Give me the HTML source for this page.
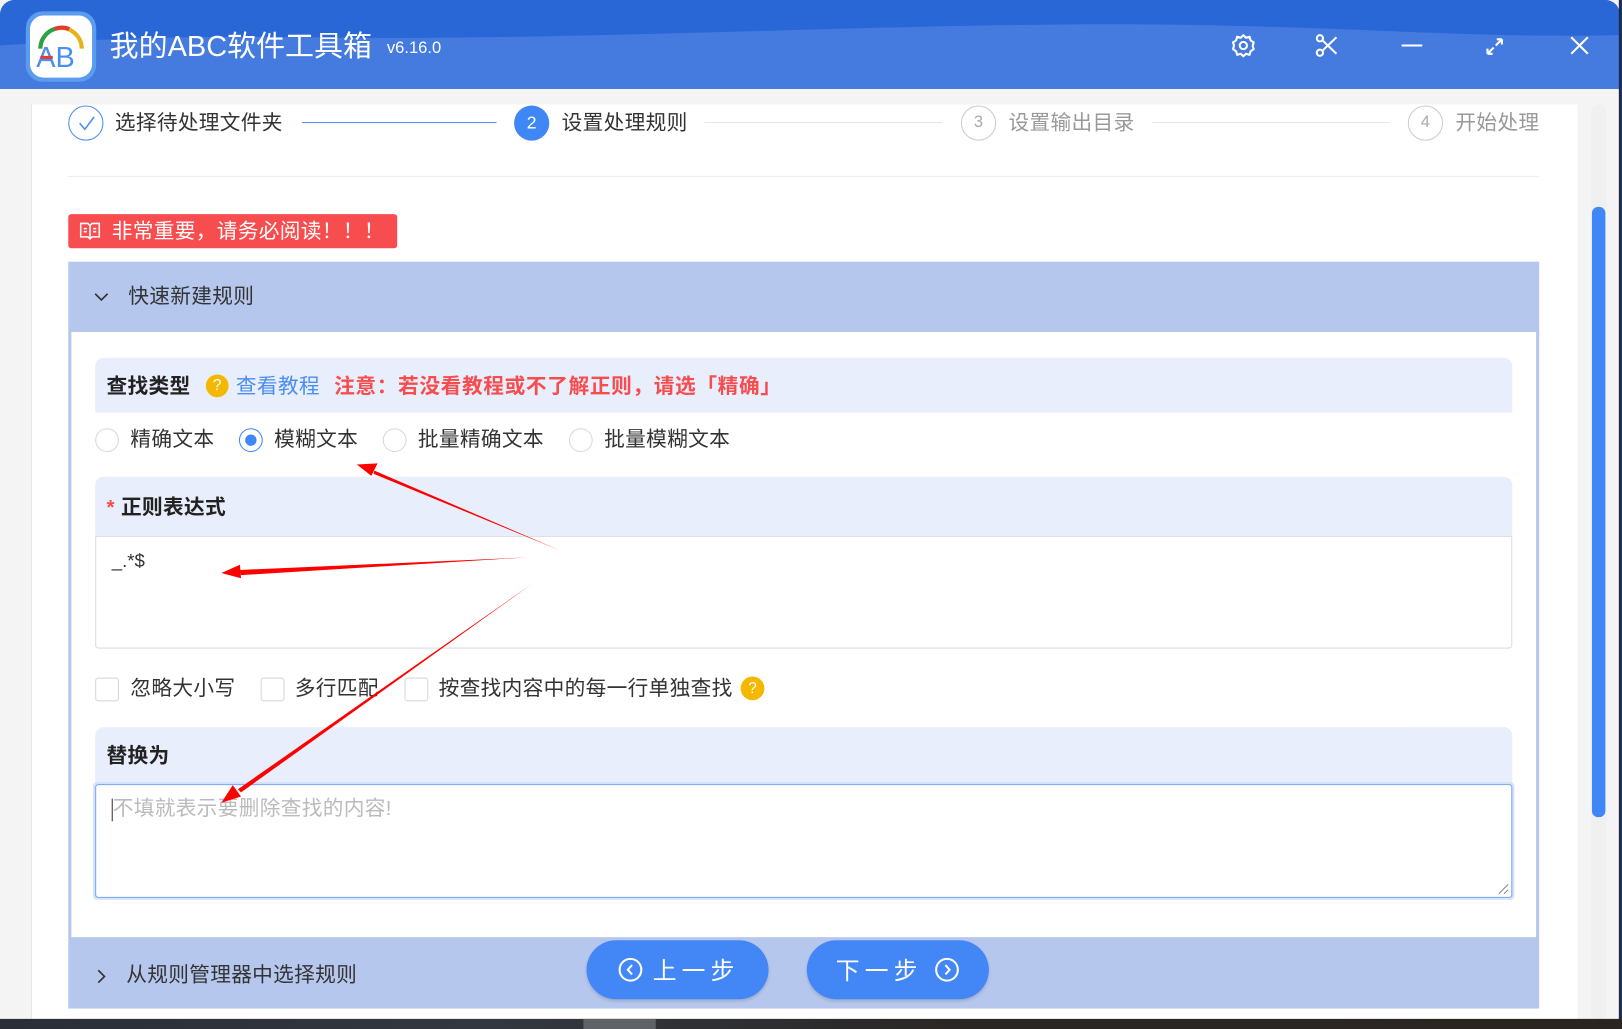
<!DOCTYPE html>
<html><head><meta charset="utf-8"><style>
*{margin:0;padding:0;box-sizing:border-box}
html,body{width:1622px;height:1029px;overflow:hidden;background:#f4f4f4}
body{font-family:"Liberation Sans","Noto Sans CJK SC",sans-serif;color:#333}
#w{position:absolute;left:0;top:0;width:1568px;height:995px;transform:scale(1.0344);transform-origin:0 0;background:#f4f4f4}
.a{position:absolute;white-space:nowrap}
.t{line-height:1;transform:translateY(-50%)}
.f{font-size:20px;letter-spacing:0.3px}
</style></head><body><div id="w">
<div class="a" style="left:0;top:0;width:1566px;height:86px;background:#457bde;border-radius:14px 14px 0 0;overflow:hidden">
<svg width="1566" height="86" style="position:absolute;left:0;top:0"><path d="M0 0H1566V34C1400 38 1250 20 1000 24C800 26 500 40 300 36C150 34 60 40 0 44Z" fill="#2a67d6"/></svg>
</div>
<div class="a" style="left:1565px;top:0;width:3px;height:995px;background:#1a2a50"></div>
<div class="a" style="left:25px;top:11px;width:68px;height:68px;border-radius:16px;background:#5b9bf0"></div>
<div class="a" style="left:29px;top:15px;width:60px;height:60px;border-radius:13px;background:#fff"></div>
<svg class="a" style="left:29px;top:15px" width="60" height="60"><path d="M10 32A20 20 0 0 1 50 32" fill="none" stroke="#e8b21b" stroke-width="4"/><path d="M10 32A20 20 0 0 1 24 13" fill="none" stroke="#2aa14b" stroke-width="4"/><path d="M24 13A20 20 0 0 1 38 13" fill="none" stroke="#e53935" stroke-width="4"/><text x="6" y="50" font-size="28" font-family="Liberation Sans" fill="#4a8ef0">AB</text><rect x="10" y="39" width="12" height="3" fill="#e53935"/></svg>
<div class="a t" style="left:106px;top:45px;font-size:28px;color:#fff">我的ABC软件工具箱</div>
<div class="a t" style="left:374px;top:47px;font-size:16px;color:#fff">v6.16.0</div>
<svg class="a" style="left:1190px;top:32px" width="350" height="26" fill="none" stroke="#fff" stroke-width="2">
<circle cx="12" cy="12" r="3.5"/><path d="M12 2l2.5 2.5 3.5-1 1 3.5 3 2-1 3.5 1 3-3 2-1 3.5-3.5-1-2.5 2.5-2.5-2.5-3.5 1-1-3.5-3-2 1-3.5-1-3 3-2 1-3.5 3.5 1z" stroke-linejoin="round"/>
<g transform="translate(81,0)"><circle cx="5" cy="5" r="3"/><circle cx="5" cy="19" r="3"/><path d="M7.5 7L21 20M7.5 17L21 4"/></g>
<path d="M165 12H185"/>
<path d="M248 20L254 14M262 6L256 12M248 20v-5M248 20h5M262 6h-5M262 6v5"/>
<path d="M329 4l16 16M345 4l-16 16"/>
</svg>
<div class="a" style="left:30px;top:101px;width:1495px;height:884px;background:#fff;border-left:1px solid #e6e6e6"></div>
<div class="a" style="left:66px;top:102px;width:34px;height:34px;border-radius:50%;border:1px solid #4a8ef0"></div>
<svg class="a" style="left:66px;top:102px" width="34" height="34"><path d="M11 17l5 6 9-12" fill="none" stroke="#4a8ef0" stroke-width="1.5"/></svg>
<div class="a t f" style="left:111px;top:119px;color:#333">选择待处理文件夹</div>
<div class="a" style="left:292px;top:118px;width:188px;height:1px;background:#4a8ef0"></div>
<div class="a" style="left:497px;top:102px;width:34px;height:34px;border-radius:50%;background:#3f87f5;color:#fff;font-size:17px;text-align:center;line-height:34px">2</div>
<div class="a t f" style="left:543px;top:119px;color:#333">设置处理规则</div>
<div class="a" style="left:681px;top:118px;width:230px;height:1px;background:#e6e6e6"></div>
<div class="a" style="left:929px;top:102px;width:34px;height:34px;border-radius:50%;border:1px solid #ccc;color:#aaa;font-size:16px;text-align:center;line-height:32px">3</div>
<div class="a t f" style="left:975px;top:119px;color:#999">设置输出目录</div>
<div class="a" style="left:1114px;top:118px;width:229px;height:1px;background:#e6e6e6"></div>
<div class="a" style="left:1361px;top:102px;width:34px;height:34px;border-radius:50%;border:1px solid #ccc;color:#aaa;font-size:16px;text-align:center;line-height:32px">4</div>
<div class="a t f" style="left:1407px;top:119px;color:#999">开始处理</div>
<div class="a" style="left:66px;top:170px;width:1422px;height:1px;background:#ececec"></div>
<div class="a" style="left:66px;top:207px;width:318px;height:33px;background:#f74d4f;border-radius:3px"></div>
<svg class="a" style="left:77px;top:214px" width="20" height="18" fill="none" stroke="#fff" stroke-width="1.5"><path d="M1 2h7l2 2 2-2h7v13h-7l-2 2-2-2H1zM10 4v13M4 7h3M4 10h3M13 7h3M13 10h3"/></svg>
<div class="a t f" style="left:108px;top:224px;color:#fff">非常重要，请务必阅读！！！</div>
<div class="a" style="left:66px;top:253px;width:1422px;height:722px;background:#b6c7ee"></div>
<svg class="a" style="left:90px;top:280px" width="16" height="14"><path d="M2 4l6 6 6-6" fill="none" stroke="#333" stroke-width="1.6"/></svg>
<div class="a t f" style="left:124px;top:287px;color:#333">快速新建规则</div>
<div class="a" style="left:69px;top:321px;width:1416px;height:585px;background:#fff"></div>
<div class="a" style="left:92px;top:346px;width:1370px;height:53px;background:#e8eefb;border-radius:8px 8px 0 0"></div>
<div class="a t f" style="left:103px;top:374px;font-weight:bold;color:#222">查找类型</div>
<div class="a" style="left:199px;top:362px;width:22px;height:22px;border-radius:50%;background:#f5b800;color:#fff;font-size:15px;text-align:center;line-height:22px">?</div>
<div class="a t f" style="left:228px;top:374px;color:#4a8ef0">查看教程</div>
<div class="a t f" style="left:323px;top:374px;font-weight:bold;color:#f74d4f;letter-spacing:0.6px">注意：若没看教程或不了解正则，请选「精确」</div>
<div class="a" style="left:92px;top:414px;width:23px;height:23px;border-radius:50%;border:1px solid #d8d8d8"></div>
<div class="a t f" style="left:126px;top:425px">精确文本</div>
<div class="a" style="left:231px;top:414px;width:23px;height:23px;border-radius:50%;border:1px solid #3f87f5"></div>
<div class="a" style="left:237px;top:420px;width:11px;height:11px;border-radius:50%;background:#3f87f5"></div>
<div class="a t f" style="left:265px;top:425px">模糊文本</div>
<div class="a" style="left:370px;top:414px;width:23px;height:23px;border-radius:50%;border:1px solid #d8d8d8"></div>
<div class="a t f" style="left:404px;top:425px">批量精确文本</div>
<div class="a" style="left:550px;top:414px;width:23px;height:23px;border-radius:50%;border:1px solid #d8d8d8"></div>
<div class="a t f" style="left:584px;top:425px">批量模糊文本</div>
<div class="a" style="left:92px;top:461px;width:1370px;height:57px;background:#e8eefb;border-radius:8px 8px 0 0"></div>
<div class="a t f" style="left:103px;top:491px;font-weight:bold;color:#222"><span style="color:#f74d4f">*</span> 正则表达式</div>
<div class="a" style="left:92px;top:518px;width:1370px;height:109px;border:1px solid #dcdcdc;border-radius:0 0 3px 3px;background:#fff"></div>
<div class="a t" style="left:108px;top:542px;font-size:18px;color:#333">_.*$</div>
<div class="a" style="left:92px;top:655px;width:23px;height:23px;border:1px solid #d8d8d8;border-radius:3px"></div>
<div class="a t f" style="left:126px;top:666px">忽略大小写</div>
<div class="a" style="left:252px;top:655px;width:23px;height:23px;border:1px solid #d8d8d8;border-radius:3px"></div>
<div class="a t f" style="left:285px;top:666px">多行匹配</div>
<div class="a" style="left:391px;top:655px;width:23px;height:23px;border:1px solid #d8d8d8;border-radius:3px"></div>
<div class="a t f" style="left:424px;top:666px">按查找内容中的每一行单独查找</div>
<div class="a" style="left:716px;top:654px;width:23px;height:23px;border-radius:50%;background:#f5b800;color:#fff;font-size:15px;text-align:center;line-height:23px">?</div>
<div class="a" style="left:92px;top:703px;width:1370px;height:55px;background:#e8eefb;border-radius:8px 8px 0 0"></div>
<div class="a t f" style="left:103px;top:731px;font-weight:bold;color:#222">替换为</div>
<div class="a" style="left:90px;top:756px;width:1374px;height:114px;background:#d4e2fb;border-radius:4px"></div>
<div class="a" style="left:92px;top:758px;width:1370px;height:110px;border:1px solid #7aa7f0;border-radius:3px;background:#fff"></div>
<div class="a" style="left:108px;top:772px;width:1px;height:22px;background:#333"></div>
<div class="a t f" style="left:109px;top:782px;color:#bbb">不填就表示要删除查找的内容!</div>
<svg class="a" style="left:1447px;top:853px" width="12" height="12"><path d="M11 2L2 11M11 7L7 11" stroke="#888"/></svg>
<svg class="a" style="left:90px;top:936px" width="16" height="16"><path d="M5 2l6 6-6 6" fill="none" stroke="#333" stroke-width="1.6"/></svg>
<div class="a t f" style="left:122px;top:943px;color:#333">从规则管理器中选择规则</div>
<div class="a" style="left:567px;top:909px;width:176px;height:57px;border-radius:29px;background:#4287f5;box-shadow:0 2px 3px rgba(0,0,0,.15)"></div>
<div class="a" style="left:598px;top:926px;width:23px;height:23px;border-radius:50%;border:2px solid #fff"></div>
<svg class="a" style="left:598px;top:926px" width="23" height="23"><path d="M13 7l-4 4.5 4 4.5" fill="none" stroke="#fff" stroke-width="2"/></svg>
<div class="a t" style="left:631px;top:939px;font-size:23px;color:#fff;letter-spacing:5px">上一步</div>
<div class="a" style="left:780px;top:909px;width:176px;height:57px;border-radius:29px;background:#4287f5;box-shadow:0 2px 3px rgba(0,0,0,.15)"></div>
<div class="a t" style="left:808px;top:939px;font-size:23px;color:#fff;letter-spacing:5px">下一步</div>
<div class="a" style="left:904px;top:926px;width:23px;height:23px;border-radius:50%;border:2px solid #fff"></div>
<svg class="a" style="left:904px;top:926px" width="23" height="23"><path d="M10 7l4 4.5-4 4.5" fill="none" stroke="#fff" stroke-width="2"/></svg>
<div class="a" style="left:1538px;top:101px;width:15px;height:884px;background:#f0f0f0;border-radius:7px"></div>
<div class="a" style="left:1539px;top:200px;width:13px;height:590px;background:#3f87f5;border-radius:6px"></div>
<div class="a" style="left:0;top:985px;width:1568px;height:10px;background:linear-gradient(90deg,#2a2e36,#333840 30%,#2a2624 60%,#2b2522)"></div>
<div class="a" style="left:564px;top:985px;width:70px;height:10px;background:#5f6266"></div>
<svg class="a" style="left:0;top:0" width="1568" height="995">
<g fill="#f00">
<path d="M541 532L362 455l-1 3z"/><path d="M345 449l20-1-6 12z"/>
<path d="M508 539L232 551l1 5z"/><path d="M214 554l18-8 1 13z"/>
<path d="M515 564L230 763l3 3z"/><path d="M214 776l11-17 8 11z"/>
</g></svg>
</div></body></html>
